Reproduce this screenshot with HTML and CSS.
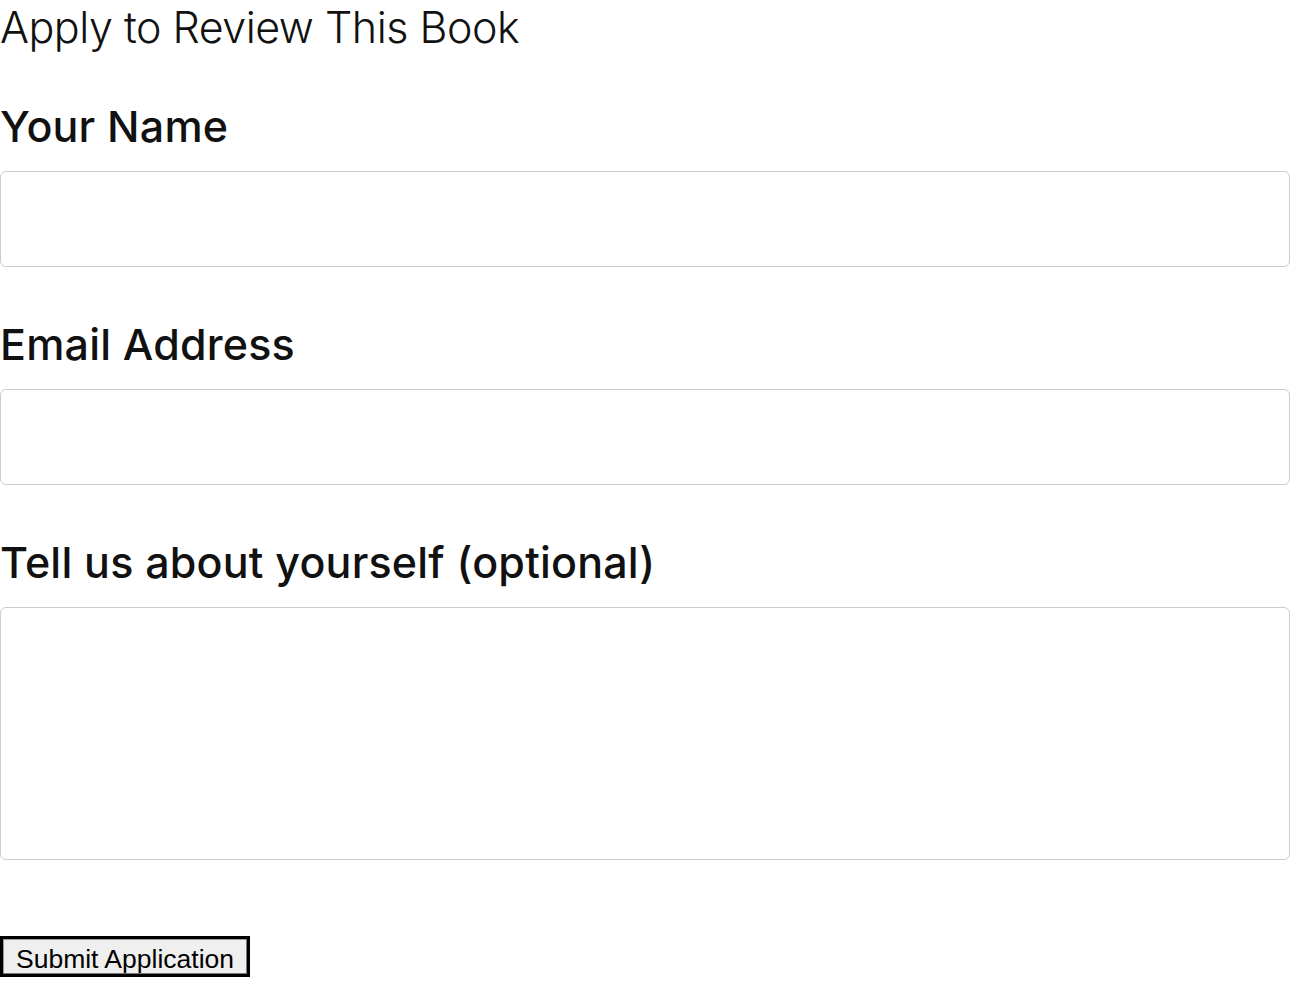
FILE: index.html
```html
<!DOCTYPE html>
<html lang="en">
<head>
<meta charset="utf-8">
<title>Apply to Review This Book</title>
<link rel="stylesheet" href="styles.css">
</head>
<body>
<h2 class="title">Apply to Review This Book</h2>
<form class="form">
  <div class="field">
    <label class="label" for="name">Your Name</label>
    <input class="input" id="name" type="text">
  </div>
  <div class="field">
    <label class="label" for="email">Email Address</label>
    <input class="input" id="email" type="email">
  </div>
  <div class="field">
    <label class="label" for="about">Tell us about yourself (optional)</label>
    <textarea class="textarea" id="about"></textarea>
  </div>
  <div class="actions">
    <button class="submit" type="submit">Submit Application</button>
  </div>
</form>
</body>
</html>
```
FILE: styles.css
```css
html, body {
  margin: 0;
  padding: 0;
  background: #fff;
}
body {
  font-family: Inter, "Noto Sans", sans-serif;
  color: #111;
}
.title {
  margin: 0;
  padding-top: 5px;
  font-size: 43px;
  font-weight: 300;
  line-height: 44px;
  letter-spacing: -0.5px;
}
.form {
  display: flex;
  flex-direction: column;
}
.field {
  display: flex;
  flex-direction: column;
  padding-top: 51px;
}
.label {
  font-size: 43px;
  font-weight: 500;
  line-height: 52px;
  letter-spacing: 0.2px;
  margin-bottom: 19px;
}
.input, .textarea {
  box-sizing: border-box;
  width: 100%;
  margin: 0;
  border: 1px solid #ccc;
  border-radius: 6px;
  background: #fff;
  font: inherit;
}
.input {
  height: 96px;
}
.textarea {
  height: 253px;
  resize: none;
}
.actions {
  padding-top: 76px;
}
.submit {
  box-sizing: border-box;
  display: block;
  height: 41px;
  width: 250px;
  margin: 0;
  padding: 5px 0 0;
  font-family: "Liberation Sans", Arial, sans-serif;
  font-size: 26.5px;
  line-height: 30px;
  color: #000;
  background: #efefef;
  border: 3px solid #000;
  border-radius: 0;
  box-shadow: inset -1px -1px 0 #767676, inset 1px 1px 0 #999;
}
```
